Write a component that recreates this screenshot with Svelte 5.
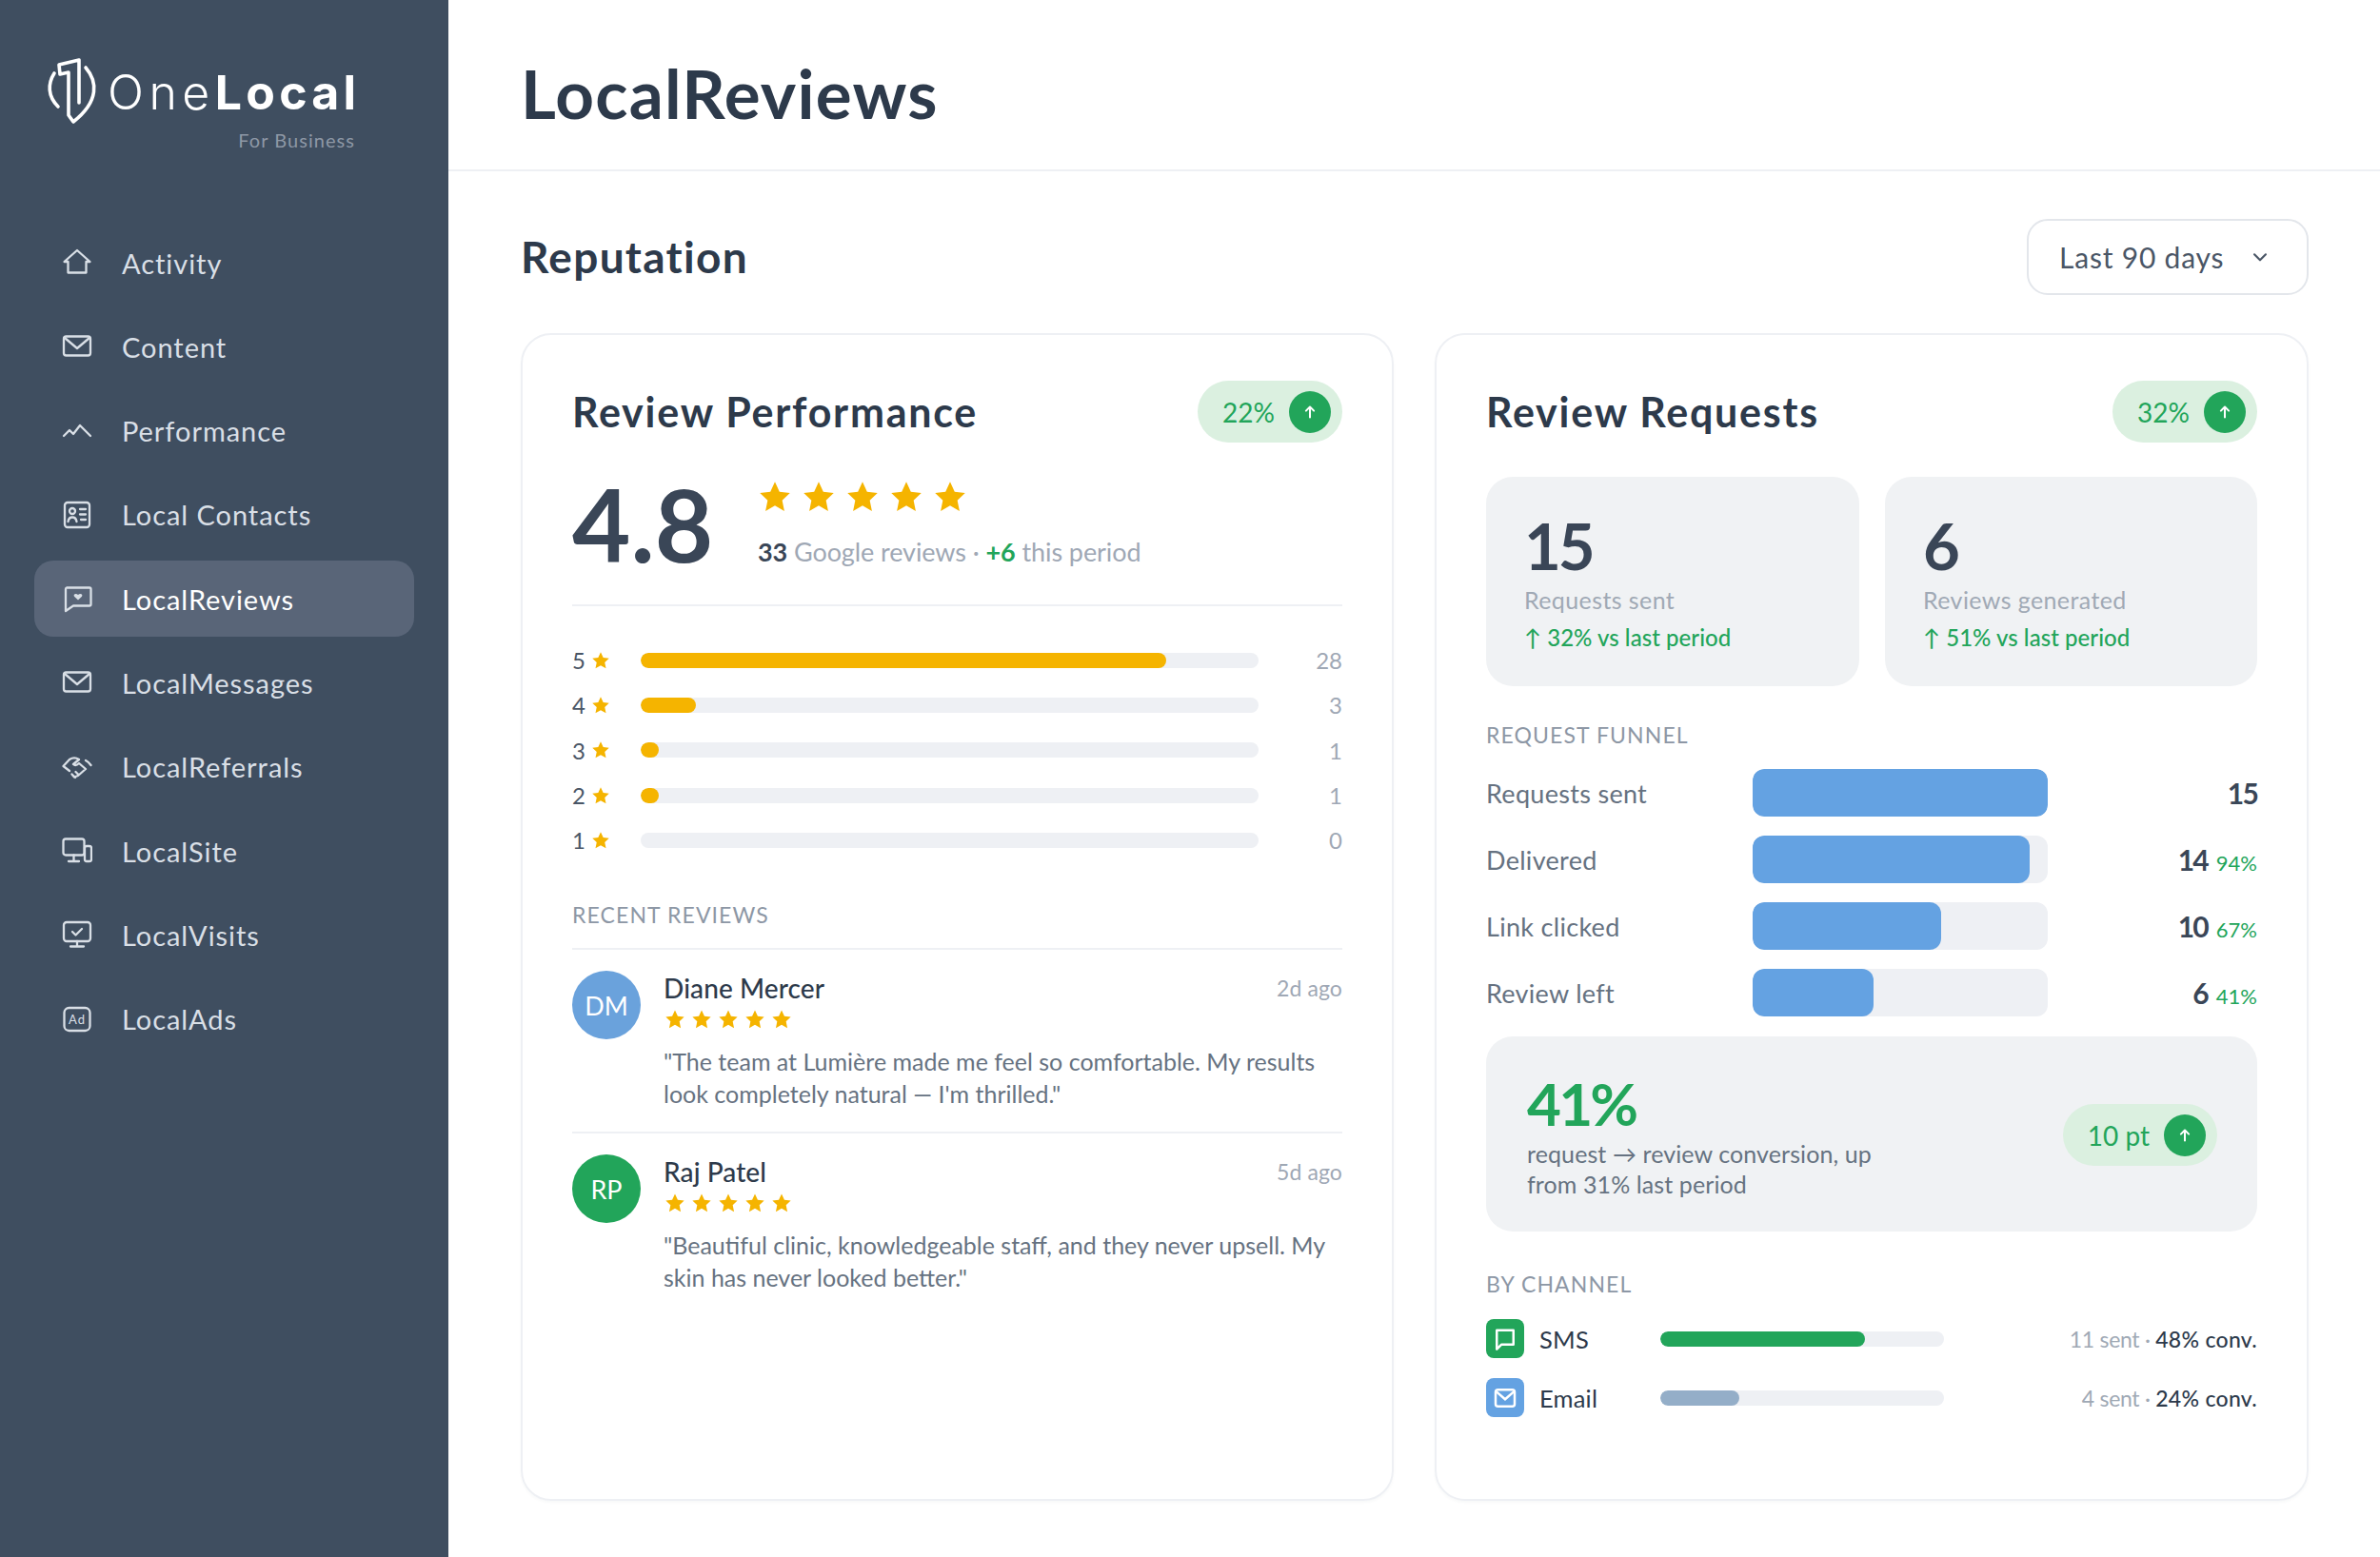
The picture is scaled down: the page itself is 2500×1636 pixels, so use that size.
<script>
  const nav = ['Activity','Content','Performance','Local Contacts','LocalReviews','LocalMessages','LocalReferrals','LocalSite','LocalVisits','LocalAds'];
  const dist = [[5,85,28],[4,9,3],[3,3,1],[2,3,1],[1,0,0]];
  const reviews = [
    {i:'DM',c:'blue',n:'Diane Mercer',t:'2d ago',l1:'"The team at Lumière made me feel so comfortable. My results',l2:'look completely natural — I\'m thrilled."'},
    {i:'RP',c:'green',n:'Raj Patel',t:'5d ago',l1:'"Beautiful clinic, knowledgeable staff, and they never upsell. My',l2:'skin has never looked better."'}
  ];
  const funnel = [['Requests sent',100,'15',''],['Delivered',94,'14','94%'],['Link clicked',64,'10','67%'],['Review left',41,'6','41%']];
</script>

{#snippet star(cls)}
  <svg class={cls} viewBox="0 0 24 24"><path d="M12 1.500l3.200 7 7.300.9-5.400 5.100 1.500 7.500-6.600-3.800-6.600 3.800 1.500-7.500L1.500 9.400l7.300-.9z" fill="#f5b400"/></svg>
{/snippet}

{#snippet pill(txt)}
  <div class="pill"><span>{txt}</span><i class="dot"><svg viewBox="0 0 24 24" width="22" height="22"><path d="M12 18V6M7.500 10.500 12 6l4.500 4.500" fill="none" stroke="#fff" stroke-width="2.200" stroke-linecap="round" stroke-linejoin="round"/></svg></i></div>
{/snippet}

{#snippet navicon(k)}
  <svg class="nicon" viewBox="0 0 32 32" fill="none" stroke="currentColor" stroke-width="2.300" stroke-linecap="round" stroke-linejoin="round">
    {#if k===0}
      <path d="M2.500 15 16 3l13.500 12H25.500v11.500h-19V15z"/>
    {:else if k===1 || k===5}
      <rect x="2" y="5.500" width="28" height="20" rx="2.500"/><path d="M3 7l13 11L29 7"/>
    {:else if k===2}
      <path d="M2 21l6-6 4 4 7-9 11 11"/>
    {:else if k===3}
      <rect x="3" y="3" width="26" height="26" rx="3"/><circle cx="11" cy="12" r="3"/><path d="M6.500 23c.5-3 2-4.500 4.500-4.500s4 1.500 4.500 4.500M19 10h6M19 15.500h6M20 21h5"/>
    {:else if k===4}
      <path d="M5 4.500h24a1.500 1.500 0 0 1 1.500 1.500v16a1.500 1.500 0 0 1-1.500 1.500H12L4 29V6a1.500 1.500 0 0 1 1-1.500z"/><path d="M17 17.500l-4-3.800c-1.500-2 1.700-4 4-1.600 2.300-2.400 5.500-.4 4 1.600z" fill="currentColor" stroke="none"/>
    {:else if k===6}
      <path d="M8 8 1.500 15 8 20M8 8c3-2 7-2 10 0l-6 5c2 2 4 1 6-1l7 6-8 7-4 1.500-2.500-3M25 9c2 1 4 3 5.500 5M14.500 21l3 3M11 24l3 3"/>
    {:else if k===7}
      <rect x="1.500" y="3.500" width="22" height="17" rx="2.500"/><path d="M12.500 20.500v6M7 27h11"/><rect x="24" y="11" width="7" height="16" rx="2" fill="#3f4e60"/>
    {:else if k===8}
      <rect x="2" y="3" width="28" height="20" rx="3"/><path d="M16 23v5M9 28.500h14M11 13l3.500 3.500L21 10"/>
    {:else}
      <rect x="2.500" y="4" width="27" height="24" rx="5"/><text x="16" y="21" text-anchor="middle" font-size="13" font-family="Lato, sans-serif" fill="currentColor" stroke="none">Ad</text>
    {/if}
  </svg>
{/snippet}

<div class="app">
  <aside class="side">
    <div class="logo">
      <div class="logo-row">
        <svg class="mark" viewBox="46 60 60 72" fill="none" stroke="#fff" stroke-width="3.600" stroke-linecap="round" stroke-linejoin="round">
          <path d="M57 77c-7 11-7 24 4 35"/>
          <path d="M90 71c12 14 15 35-13 57l-5-7V76l-9 2-1-10 21-5v45"/>
        </svg>
        <span class="lt"><span class="one">One</span><b>Local</b></span>
      </div>
      <div class="fb">For Business</div>
    </div>
    <nav class="nav">
      {#each nav as n,i}
        <div class="item" class:active={i===4}>
          {@render navicon(i)}
          <span>{n}</span>
        </div>
      {/each}
    </nav>
  </aside>

  <main class="main">
    <header class="top"><h1>LocalReviews</h1></header>
    <div class="content">
      <div class="sec">
        <h2>Reputation</h2>
        <div class="select"><span>Last 90 days</span><svg viewBox="0 0 24 24" width="26" height="26"><path d="M6.500 9.500 12 15l5.500-5.500" fill="none" stroke="#4a5666" stroke-width="2" stroke-linecap="round" stroke-linejoin="round"/></svg></div>
      </div>
      <div class="cards">
        <section class="card">
          <div class="chead"><h3>Review Performance</h3>{@render pill('22%')}</div>
          <div class="rating">
            <div class="big">4.8</div>
            <div class="rr">
              <div class="bigstars">{#each Array(5) as _}{@render star('s32')}{/each}</div>
              <div class="rtext"><b>33</b> Google reviews · <b class="g">+6</b> this period</div>
            </div>
          </div>
          <div class="dist">
            {#each dist as d}
              <div class="drow">
                <span class="dn">{d[0]}</span>{@render star('s20')}
                <div class="track"><div class="fill" style="width:{d[1]}%"></div></div>
                <span class="dc">{d[2]}</span>
              </div>
            {/each}
          </div>
          <div class="label rec">RECENT REVIEWS</div>
          {#each reviews as r,i}
            <div class="rev" class:last={i===1}>
              <div class="av {r.c}">{r.i}</div>
              <div class="rb">
                <div class="rn"><span class="name">{r.n}</span><span class="time">{r.t}</span></div>
                <div class="rs">{#each Array(5) as _}{@render star('s22')}{/each}</div>
                <p>{r.l1}<br>{r.l2}</p>
              </div>
            </div>
          {/each}
        </section>

        <section class="card">
          <div class="chead"><h3>Review Requests</h3>{@render pill('32%')}</div>
          <div class="boxes">
            <div class="box"><div class="num">15</div><div class="bl">Requests sent</div><div class="bd">↑ 32% vs last period</div></div>
            <div class="box"><div class="num">6</div><div class="bl">Reviews generated</div><div class="bd">↑ 51% vs last period</div></div>
          </div>
          <div class="label fun">REQUEST FUNNEL</div>
          <div class="funnel">
            {#each funnel as f}
              <div class="frow">
                <span class="fl">{f[0]}</span>
                <div class="ftrack"><div class="ffill" style="width:{f[1]}%"></div></div>
                <span class="fv"><b>{f[2]}</b>{#if f[3]}<em>{f[3]}</em>{/if}</span>
              </div>
            {/each}
          </div>
          <div class="conv">
            <div>
              <div class="cp">41%</div>
              <div class="ct">request → review conversion, up<br>from 31% last period</div>
            </div>
            {@render pill('10 pt')}
          </div>
          <div class="label chan">BY CHANNEL</div>
          <div class="chs">
            <div class="ch">
              <i class="ci green"><svg viewBox="0 0 24 24" width="30" height="30"><path d="M5 4.500h14v12H9l-4 4z" fill="none" stroke="#fff" stroke-width="2" stroke-linejoin="round"/></svg></i>
              <span class="cn">SMS</span>
              <div class="ctrack"><div class="cfill gr" style="width:72%"></div></div>
              <span class="cr">11 sent · <b>48% conv.</b></span>
            </div>
            <div class="ch">
              <i class="ci blue"><svg viewBox="0 0 24 24" width="30" height="30"><rect x="4" y="5" width="16" height="14" rx="2" fill="none" stroke="#fff" stroke-width="2"/><path d="M4.500 6.500 12 13l7.500-6.500" fill="none" stroke="#fff" stroke-width="2"/></svg></i>
              <span class="cn">Email</span>
              <div class="ctrack"><div class="cfill gy" style="width:28%"></div></div>
              <span class="cr">4 sent · <b>24% conv.</b></span>
            </div>
          </div>
        </section>
      </div>
    </div>
  </main>
</div>

<style>
  :global(body){margin:0;background:#fff;font-family:Lato,"Noto Sans",sans-serif;color:#2d3a4b}
  .app{display:flex;width:2500px;height:1636px;overflow:hidden}
  .side{width:471px;flex:none;background:#3f4e60;box-sizing:border-box;padding:60px 36px 0;color:#dfe4ea}
  .logo{height:176px;margin-left:10px;width:327px}
  .logo-row{display:flex;align-items:center;height:72px}
  .mark{width:60px;height:72px;flex:none}
  .lt{font-family:Inter,Lato,sans-serif;font-size:50px;color:#fff;margin-left:7px;letter-spacing:4.200px;line-height:72px;margin-top:2px;white-space:nowrap}
  .one{font-weight:300;letter-spacing:5.500px}
  .lt b{font-weight:700}
  .fb{text-align:right;font-size:20px;color:#8e98a6;letter-spacing:1.050px;margin-top:2px;line-height:26px}
  .nav{display:flex;flex-direction:column;gap:8.300px}
  .item{height:80px;display:flex;align-items:center;border-radius:20px;padding-left:29px;font-size:29px;letter-spacing:.95px;color:#d9dfe6}
  .item.active{background:#596578;color:#fff}
  .nicon{width:32px;height:32px;flex:none;margin-right:31px;color:#d9dfe6}
  .main{flex:1;min-width:0}
  .top{height:180px;border-bottom:2px solid #eef0f4;box-sizing:border-box;padding:52px 76px 0}
  h1{margin:0;font-size:71px;line-height:92px;font-weight:700;color:#2d3a4b;letter-spacing:1.200px}
  .content{padding:50px 75px 0 76px}
  .sec{display:flex;justify-content:space-between;align-items:center;height:80px;margin-bottom:40px}
  h2{margin:0;font-size:46px;font-weight:700;letter-spacing:1.300px;color:#2d3a4b;line-height:60px}
  .select{width:296px;height:80px;box-sizing:border-box;border:2px solid #e3e6eb;border-radius:22px;display:flex;align-items:center;justify-content:space-between;padding:0 36px 0 32px;font-size:30px;letter-spacing:.8px;color:#4a5666}
  .cards{display:grid;grid-template-columns:917px 918px;gap:43px}
  .card{height:1227px;box-sizing:border-box;border:2px solid #eef0f4;border-radius:32px;padding:48px 52px 0;box-shadow:0 2px 3px rgba(40,50,70,.03)}
  .chead{display:flex;justify-content:space-between;align-items:center;height:65px}
  h3{margin:0;font-size:43px;font-weight:700;letter-spacing:1.750px;color:#2d3a4b}
  .pill{display:flex;align-items:center;height:65px;box-sizing:border-box;padding:0 12px 0 26px;border-radius:33px;background:#dbf0e0;color:#22a55a;font-size:28px;letter-spacing:0;gap:15px}
  .dot{width:44px;height:44px;border-radius:50%;background:#22a55a;display:flex;align-items:center;justify-content:center}
  .rating{display:flex;height:172px;box-sizing:border-box;border-bottom:2px solid #eef0f4;padding-top:21px}
  .big{font-size:106px;font-weight:700;line-height:128px;width:195px;letter-spacing:0;color:#3a4657}
  .bigstars{display:flex;gap:10px;margin-top:18px;margin-left:0}
  .s32{width:36px;height:36px;display:block}
  .s22{width:22px;height:22px;display:block}
  .s20{width:20px;height:20px;display:block;margin-left:6px}
  .rtext{font-size:27px;letter-spacing:-.09px;color:#9fa8b5;margin-top:22px;line-height:36px}
  .rtext b{font-weight:700;color:#3a4657}
  .rtext b.g{color:#22a55a}
  .dist{margin-top:33px}
  .drow{height:47.300px;display:flex;align-items:center;font-size:24px;color:#4a5666}
  .dn{width:14px}
  .track{width:649px;height:16px;border-radius:8px;background:#eef0f4;margin-left:32px;flex:none;overflow:hidden}
  .fill{height:100%;background:#f5b400;border-radius:8px}
  .dc{flex:1;text-align:right;color:#9fa8b5}
  .label{font-size:23px;letter-spacing:1.100px;color:#8d97a5;line-height:34px}
  .rec{margin-top:38px;padding-bottom:18px;border-bottom:2px solid #eef0f4}
  .rev{display:flex;gap:24px;height:193px;box-sizing:border-box;padding-top:22px;border-bottom:2px solid #eef0f4}
  .rev.last{border-bottom:0}
  .av{width:72px;height:72px;border-radius:50%;display:flex;align-items:center;justify-content:center;color:#fff;font-size:27px;flex:none}
  .av.blue{background:#6aa2dc}
  .av.green{background:#22a55a}
  .rb{flex:1;min-width:0}
  .rn{display:flex;justify-content:space-between;line-height:36px}
  .name{font-size:28px;font-weight:500;letter-spacing:.1px;color:#2d3a4b}
  .time{font-size:23px;color:#9fa8b5;letter-spacing:.1px}
  .rs{display:flex;gap:6px;margin-top:3px;margin-left:1px;height:24px;align-items:center}
  .rb p{margin:15px 0 0;font-size:25px;line-height:34px;color:#667281;letter-spacing:0;white-space:nowrap}
  .boxes{display:grid;grid-template-columns:392px 391px;gap:27px;margin-top:36px}
  .box{height:220px;box-sizing:border-box;background:#f0f2f4;border-radius:28px;padding:37px 40px 0}
  .num{font-size:67px;font-weight:700;line-height:70px;color:#3a4657;letter-spacing:-3px}
  .bl{font-size:25px;line-height:34px;margin-top:5px;color:#a0a9b5;letter-spacing:.4px}
  .bd{font-size:24px;line-height:32px;margin-top:7px;color:#22a55a;letter-spacing:.05px;font-weight:500}
  .fun{margin-top:34px}
  .funnel{display:flex;flex-direction:column;gap:20px;margin-top:19px}
  .frow{display:flex;align-items:center;height:50px}
  .fl{width:280px;font-size:27px;color:#667281;letter-spacing:.3px;flex:none}
  .ftrack{width:310px;height:50px;border-radius:12px;background:#eef0f4;flex:none;overflow:hidden}
  .ffill{height:100%;background:#64a2e2;border-radius:12px}
  .fv{flex:1;text-align:right}
  .fv b{font-size:30px;font-weight:700;color:#3a4657;letter-spacing:-1.800px}
  .fv em{font-style:normal;font-size:22px;color:#22a55a;margin-left:9px}
  .conv{height:205px;box-sizing:border-box;background:#f0f2f4;border-radius:28px;margin-top:21px;padding:35px 42px 0 43px;display:flex;justify-content:space-between}
  .cp{font-size:62px;font-weight:700;line-height:70px;color:#22a55a;letter-spacing:-2.800px}
  .ct{font-size:25px;line-height:32px;margin-top:2px;color:#667281;letter-spacing:.1px}
  .conv .pill{margin-top:36px}
  .chan{margin-top:38px}
  .chs{display:flex;flex-direction:column;gap:21px;margin-top:20px}
  .ch{display:flex;align-items:center;height:41px}
  .ci{width:40px;height:41px;border-radius:8px;display:flex;align-items:center;justify-content:center;flex:none}
  .ci.green{background:#22a55a}
  .ci.blue{background:#64a2e2}
  .cn{width:127px;margin-left:16px;font-size:25.500px;letter-spacing:.2px;flex:none;color:#2d3a4b}
  .ctrack{width:298px;height:16px;border-radius:8px;background:#eef0f4;flex:none;overflow:hidden}
  .cfill{height:100%;border-radius:8px}
  .gr{background:#22a55a}
  .gy{background:#94aec8}
  .cr{flex:1;text-align:right;font-size:23px;color:#a0a9b5;letter-spacing:-.3px}
  .cr b{font-weight:500;color:#2d3a4b;letter-spacing:.3px}
</style>
